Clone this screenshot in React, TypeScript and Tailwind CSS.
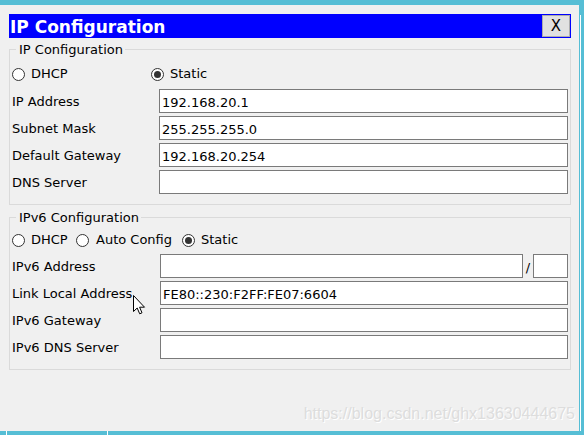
import React from "react";

function Radio({ checked }: { checked?: boolean }) {
  return (
    <span className="w-[13px] h-[13px] rounded-full border border-[#333333] bg-white flex items-center justify-center shrink-0">
      {checked ? <span className="w-[7px] h-[7px] rounded-full bg-[#333333]" /> : null}
    </span>
  );
}

function Field({ value }: { value?: string }) {
  return (
    <div className="h-[24px] border border-[#7a7a7a] bg-white pl-[2px] pt-[2px] flex items-center leading-none whitespace-nowrap">
      {value}
    </div>
  );
}

function Label({ text }: { text: string }) {
  return <div className="h-[24px] pl-[2px] pt-[2px] flex items-center whitespace-nowrap">{text}</div>;
}

export default function App() {
  return (
    <div className="w-[584px] h-[435px] bg-[#56bed5] flex flex-col overflow-hidden relative font-['DejaVu_Sans',sans-serif] text-[13px] text-black">
      <div className="h-[5px] shrink-0" />
      <div className="flex h-[426px] shrink-0">
        <div className="w-[579px] bg-[#f0f0f0] pl-[9px] pr-[8px] pt-[9px]">
          {/* Title bar */}
          <div className="h-[24px] bg-[#0000ff] flex items-center justify-between">
            <span className="text-[17px] font-bold text-white leading-none pl-[1px] pt-[2px]">IP Configuration</span>
            <div className="w-[28px] h-[22px] mr-[1px] bg-[#e1e1e1] border border-[#adadad] flex items-center justify-center text-[15px] leading-none pt-[1px]">
              X
            </div>
          </div>

          {/* IPv4 group */}
          <fieldset className="mt-[3px] border border-[#dadada] pb-[10px]">
            <legend className="ml-[6px] pl-[3px] pr-[2px] leading-[16px]">
              <span className="relative top-[1px]">IP Configuration</span>
            </legend>
            <div className="h-[32px] flex items-center pl-[2px] pt-[2px]">
              <div className="w-[139px] flex items-center gap-[6px]">
                <Radio />
                <span>DHCP</span>
              </div>
              <div className="flex items-center gap-[6px]">
                <Radio checked />
                <span>Static</span>
              </div>
            </div>
            <div className="grid grid-cols-[149px_409px] gap-y-[3px]">
              <Label text="IP Address" />
              <Field value="192.168.20.1" />
              <Label text="Subnet Mask" />
              <Field value="255.255.255.0" />
              <Label text="Default Gateway" />
              <Field value="192.168.20.254" />
              <Label text="DNS Server" />
              <Field />
            </div>
          </fieldset>

          {/* IPv6 group */}
          <fieldset className="mt-[4px] border border-[#dadada] pb-[10px]">
            <legend className="ml-[6px] pl-[3px] pr-[2px] leading-[16px]">
              <span className="relative top-[1px]">IPv6 Configuration</span>
            </legend>
            <div className="h-[29px] flex items-center pl-[2px] pt-[1px]">
              <div className="w-[64px] flex items-center gap-[6px]">
                <Radio />
                <span>DHCP</span>
              </div>
              <div className="w-[106px] flex items-center gap-[7px]">
                <Radio />
                <span>Auto Config</span>
              </div>
              <div className="flex items-center gap-[6px]">
                <Radio checked />
                <span>Static</span>
              </div>
            </div>
            <div className="grid grid-cols-[150px_408px] gap-y-[3px]">
              <Label text="IPv6 Address" />
              <div className="flex items-center">
                <div className="w-[363px]">
                  <Field />
                </div>
                <div className="w-[10px] text-center leading-none pt-[2px]">/</div>
                <div className="w-[35px]">
                  <Field />
                </div>
              </div>
              <Label text="Link Local Address" />
              <Field value="FE80::230:F2FF:FE07:6604" />
              <Label text="IPv6 Gateway" />
              <Field />
              <Label text="IPv6 DNS Server" />
              <Field />
            </div>
          </fieldset>
        </div>
        <div className="flex-1 flex">
          <div className="w-[1px]" />
          <div className="w-[1px] bg-white mt-[10px]" />
        </div>
      </div>
      <div className="flex-1 flex">
        <div className="w-[6px]" />
        <div className="w-[1px] bg-white" />
        <div className="w-[100px]" />
        <div className="w-[1px] bg-white" />
      </div>

      {/* watermark */}
      <div className="absolute right-[9px] top-[404px] font-['Liberation_Sans',Arial,sans-serif] text-[16px] leading-[20px] text-[#dddddd] [text-shadow:1px_1px_0_#ffffff] whitespace-nowrap">
        https://blog.csdn.net/ghx13630444675
      </div>

      {/* mouse cursor */}
      <svg className="absolute left-[133px] top-[295px]" width="13" height="20" viewBox="0 0 13 20">
        <path d="M0.5 0.5 L0.5 16.5 L4.2 13 L6.7 18.8 L9 17.8 L6.6 12.2 L11.5 12.2 Z" fill="#ffffff" stroke="#000000" strokeWidth="1" strokeLinejoin="miter" />
      </svg>
    </div>
  );
}
